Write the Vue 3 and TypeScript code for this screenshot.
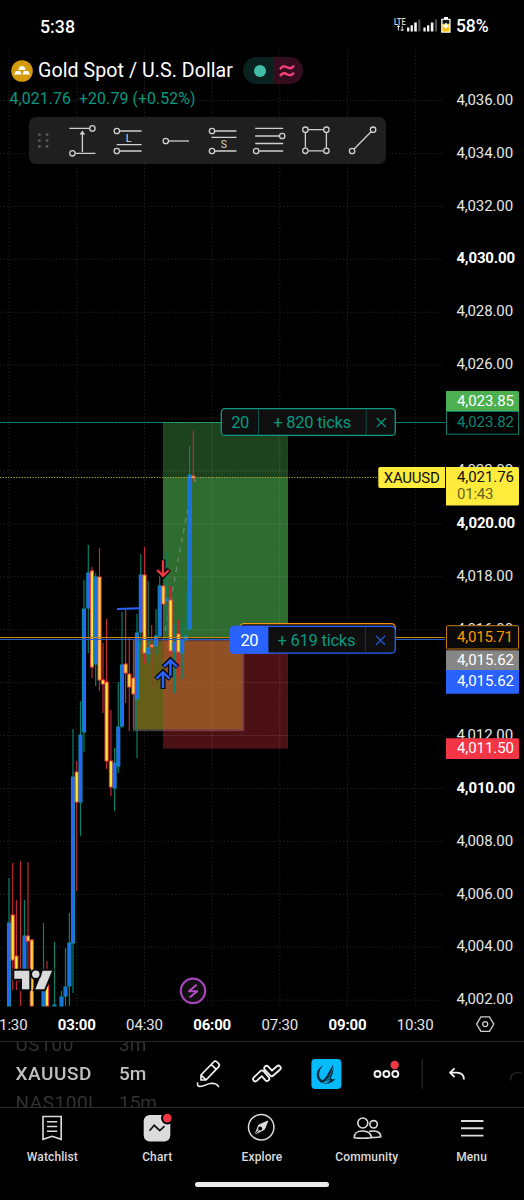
<script setup lang="ts">
type Candle = { x: number; hi: number; lo: number; top: number; bot: number; up: boolean }

const U = true
const D = false
const raw: [number, number, number, number, number, boolean][] = [
  [9, 878, 1006, 923, 1006, U], [12.7, 863, 990, 915, 960, D], [16.4, 900, 990, 956, 970, D],
  [20.5, 861, 1006, 980, 981, D], [24.5, 900, 985, 936, 972, U], [28, 862, 980, 936, 941, D],
  [31.7, 939, 1006, 940, 1006, D], [43.5, 923, 1006, 985, 1006, U], [47, 961, 1006, 985, 1006, D],
  [54.5, 942, 1006, 1005, 1006, U], [61.5, 991, 1006, 997, 1006, U], [65.5, 948, 1006, 987, 996, U],
  [69.4, 913, 1006, 943, 986, U], [73, 729, 993, 777, 943, U], [76.7, 761, 891, 772, 802, D],
  [80.5, 701, 836, 735, 802, U], [84, 580, 752, 609, 732, U], [88.3, 545, 653, 573, 608, U],
  [92, 567, 678, 571, 667, D], [95.7, 573, 686, 577, 664, U], [99.5, 548, 691, 577, 680, D],
  [103, 643, 713, 680, 684, D], [106.6, 619, 769, 682, 761, D], [110.9, 710, 796, 761, 787, D],
  [114.6, 748, 811, 763, 788, U], [118.3, 682, 773, 727, 766, U], [122, 612, 728, 665, 726, U],
  [125.6, 610, 703, 664, 673, D], [129.3, 637, 731, 674, 687, D], [133.4, 640, 728, 678, 694, D],
  [137, 614, 758, 633, 699, U], [140.8, 554, 647, 575, 632, U], [144.5, 547, 664, 575, 653, D],
  [148.2, 581, 663, 648, 654, U], [151.7, 625, 686, 645, 647, D], [156, 609, 655, 636, 646, U],
  [159.7, 576, 638, 586, 636, U], [163.4, 583, 660, 586, 604, D], [167, 553, 632, 599, 601, U],
  [170.6, 586, 654, 600, 651, D], [174.4, 624, 693, 642, 651, U], [178.5, 620, 676, 634, 652, D],
  [182.2, 622, 679, 640, 653, U], [186, 592, 641, 636, 640, U], [189.6, 446, 634, 475, 629, U],
  [193.3, 431, 483, 476, 478, D],
]
const candles: Candle[] = raw.map(([x, hi, lo, top, bot, up]) => ({ x, hi, lo, top, bot, up }))

const gridX = [9.2, 76.8, 144.5, 212.2, 279.8, 347.5, 415.2]
const gridY = Array.from({ length: 18 }, (_, i) => 100.5 + i * 52.92)

const prices = gridY
  .map((y, i) => {
    const value = 4036 - i * 2
    return { y: y + 4.2, text: `${value.toLocaleString('en-US')}.00`, bold: value % 10 === 0, value }
  })
  .filter((p) => p.value !== 4024 && p.value !== 4014)

const times = ['01:30', '03:00', '04:30', '06:00', '07:30', '09:00', '10:30'].map((text, i) => ({
  text,
  x: gridX[i],
  bold: i === 1 || i === 3 || i === 5,
}))

const tabs = ['Watchlist', 'Chart', 'Explore', 'Community', 'Menu']
</script>

<template>
  <div class="screen">
    <header class="status">
      <span class="clock">5:38</span>
      <svg class="signals" width="60" height="20" viewBox="393 17 60 20">
        <text x="394" y="26.4" class="lte" textLength="11.5" lengthAdjust="spacingAndGlyphs">LTE</text>
        <path d="M398.4 26.5v5M396.9 28l1.5-1.6 1.5 1.6M402.2 32v-4.8M400.8 30.4l1.4 1.6 1.4-1.6" stroke="#ddd" stroke-width="1" fill="none" />
        <g fill="#f5f5f5">
          <path d="M407 28.5h2.3v4H407zM410.6 26.3h2.3v6.2h-2.3zM414.2 23.5h2.6v9h-2.6z" />
          <path d="M423.4 28.5h2.3v4h-2.3zM427 26.3h2.3v6.2H427zM430.8 23.5h2.6v9h-2.6z" />
        </g>
        <path d="M418.2 20.5h2.3v12h-2.3zM434.8 20.5h2.3v12h-2.3z" fill="#4d4d4d" />
        <path d="M444 18h4v1.7h2.6v14.1h-9.4V19.7h2.8z" fill="#fff" />
        <path d="M442.5 20.9h6.8v4h-6.8z" fill="#151515" />
        <path d="M442.5 24.9h6.8v7.7h-6.8z" fill="#fbbc04" />
        <path d="M445.9 24l.9 2 2 .9-2 .9-.9 2-.9-2-2-.9 2-.9z" fill="#fff" stroke="#fff" stroke-width=".8" />
      </svg>
      <span class="battery">58%</span>
    </header>

    <main class="chart">
      <svg class="canvas" width="524" height="992" viewBox="0 49 524 992">
        <g class="grid">
          <line v-for="x in gridX" :key="'x' + x" :x1="x" :x2="x" y1="49" y2="1006" />
          <line v-for="y in gridY" :key="'y' + y" x1="0" x2="444" :y1="y" :y2="y" />
        </g>

        <rect x="134" y="640.5" width="109.2" height="89.7" fill="#665e18" stroke="#46413f" stroke-width="2" />
        <rect x="163" y="422.5" width="125" height="216" fill="#4caf50" fill-opacity=".38" />
        <rect x="163" y="477.3" width="125" height="161.2" fill="#4caf50" fill-opacity=".38" />
        <rect x="163" y="640.5" width="125" height="108.2" fill="#f23645" fill-opacity=".31" />
        <g class="grid over">
          <line x1="212.2" x2="212.2" y1="422" y2="749" />
          <line x1="279.8" x2="279.8" y1="422" y2="749" />
          <line v-for="y in gridY.slice(7, 13)" :key="'o' + y" x1="163" x2="288" :y1="y" :y2="y" />
        </g>
        <path d="M165 631L187.5 510M193 478L198.5 484.5" fill="none" stroke="#8d9a8c" stroke-opacity=".65" stroke-width="1.2" stroke-dasharray="5 5" />

        <g v-for="c in candles" :key="c.x">
          <line :x1="c.x" :x2="c.x" :y1="c.hi" :y2="c.lo" :class="c.up ? 'wick-up' : 'wick-down'" />
          <rect :x="c.x - 1.55" :y="c.top" width="3.1" :height="c.bot - c.top" :class="c.up ? 'body-up' : 'body-down'" />
        </g>

        <line x1="117" y1="609" x2="140" y2="608.2" stroke="#2962ff" stroke-width="2" />
        <line x1="0" x2="445" y1="422.5" y2="422.5" stroke="#07806f" />
        <line x1="163" x2="222" y1="422.5" y2="422.5" stroke="#1f9a6c" />
        <line x1="0" x2="378" y1="477.5" y2="477.5" stroke="#b6a93a" stroke-dasharray="1.3 1.4" />
        <line x1="0" x2="445" y1="637.5" y2="637.5" stroke="#c98410" />
        <line x1="0" x2="445" y1="639.5" y2="639.5" stroke="#2d5ccc" />

        <g fill="none">
          <g stroke="#0b0b0b" stroke-width="5">
            <path d="M163 559.5v16M156.8 569.3l6.2 6.5 6.2-6.5" />
            <path d="M170.4 677v-16.5M163.2 667l7.2-7 7.2 7" />
            <path d="M163 689v-16.5M155.8 679l7.2-7 7.2 7" />
          </g>
          <path d="M163 560.3v15M157.2 569.9l5.8 6 5.8-6" stroke="#f23645" stroke-width="2.2" />
          <path d="M170.4 676v-15M163.8 666.7l6.6-6.4 6.6 6.4" stroke="#2962ff" stroke-width="2.4" />
          <path d="M163 688v-15M156.4 678.7l6.6-6.4 6.6 6.4" stroke="#2962ff" stroke-width="2.4" />
        </g>

        <g class="tag">
          <rect x="221.3" y="408.6" width="174" height="26.8" rx="3.5" fill="#0f0f0f" stroke="#0e9a84" stroke-width="1.3" />
          <path d="M258.5 409.5v25.3M366.2 409.5v25.3" stroke="#114f4b" />
          <text x="231.3" y="428.3" textLength="18" fill="#089981">20</text>
          <text x="273.2" y="428.3" textLength="78" fill="#089981">+ 820 ticks</text>
          <path d="M376.8 418l9 9M385.8 418l-9 9" stroke="#089981" stroke-width="1.1" />
        </g>
        <rect x="240" y="623.6" width="155.2" height="20" rx="4" fill="#0f0f0f" stroke="#f5920b" stroke-width="1.3" />
        <g class="tag">
          <rect x="230.4" y="626.4" width="164.9" height="26.8" rx="4" fill="#0f0f0f" stroke="#2962ff" stroke-width="1.3" />
          <path d="M233.9 625.8H268.4V653.8H233.9A4 4 0 0 1 229.9 649.8V629.8A4 4 0 0 1 233.9 625.8Z" fill="#2962ff" />
          <path d="M365.4 627v25.6" stroke="#1b3068" />
          <text x="240.6" y="646.2" textLength="18" fill="#fff">20</text>
          <text x="277.5" y="646.2" textLength="78" fill="#089981">+ 619 ticks</text>
          <path d="M376 635.8l9 9M385 635.8l-9 9" stroke="#2962ff" stroke-width="1.1" />
        </g>

        <g class="axis">
          <text v-for="p in prices" :key="p.text" x="456.4" :y="p.y" :class="{ bold: p.bold }" :textLength="p.bold ? 58.7 : 56.7">{{ p.text }}</text>
          <text v-for="t in times" :key="t.text" :x="t.x" y="1029.9" text-anchor="middle" :class="{ bold: t.bold }" :textLength="t.bold ? 38 : 36.8">{{ t.text }}</text>
        </g>

        <g class="badge">
          <path d="M446 391h71.5q1.5 0 1.5 1.5V411H446z" fill="#4caf50" />
          <text x="457" y="405.9" textLength="57" fill="#fff">4,023.85</text>
          <rect x="446.5" y="411.5" width="72" height="22.7" fill="#000" stroke="#087c6b" />
          <text x="457" y="427.3" textLength="57" fill="#089981" fill-opacity=".9">4,023.82</text>
          <path d="M380 467H445v21H380q-1.7 0-1.7-1.7v-17.6q0-1.7 1.7-1.7z" fill="#ffeb3b" />
          <text x="383.8" y="483" textLength="56" fill="#0f0f0f">XAUUSD</text>
          <path d="M446 467h71.3q1.7 0 1.7 1.7v35.1q0 1.7-1.7 1.7H446z" fill="#ffeb3b" />
          <text x="457" y="481.6" textLength="57" fill="#0f0f0f">4,021.76</text>
          <text x="457" y="499" textLength="36.5" fill="#69631f">01:43</text>
          <rect x="446.5" y="625.7" width="72" height="23.3" rx="1" fill="#0a0a0a" stroke="#c47a10" />
          <text x="457" y="641.6" textLength="56" fill="#ff9800">4,015.71</text>
          <path d="M446 650.3h73V670h-73z" fill="#868686" />
          <text x="457" y="665" textLength="57" fill="#fff">4,015.62</text>
          <path d="M446 670h73v22.2q0 1.5-1.5 1.5H446z" fill="#2962ff" />
          <text x="457" y="686.2" textLength="57" fill="#fff">4,015.62</text>
          <path d="M446 738.3h71.5q1.5 0 1.5 1.5v17.7q0 1.5-1.5 1.5H446z" fill="#f23645" />
          <text x="457" y="753" textLength="57" fill="#fff">4,011.50</text>
        </g>

        <g fill="#dbdbdb" stroke="#0b0b0b" stroke-width="4" paint-order="stroke">
          <path d="M14.3 970.7h15v18.6H22v-10.6h-7.7z" />
          <path d="M42.7 970.7H52l-7.7 18.6h-9z" />
          <circle cx="35.8" cy="974.3" r="3.7" />
        </g>
        <circle cx="193" cy="990.8" r="12.2" fill="#0f0f0f" stroke="#a945bb" stroke-width="2.2" />
        <path d="M196.6 984.8l-7.6 6.4h8.2l-7.6 6.4" fill="none" stroke="#b44bc7" stroke-width="2" stroke-linejoin="round" />
        <path d="M480.9 1016.8h8.6l4.3 7.3-4.3 7.3h-8.6l-4.3-7.3z" fill="none" stroke="#cfcfcf" stroke-width="1.3" />
        <circle cx="485.2" cy="1024.1" r="2.5" fill="none" stroke="#cfcfcf" stroke-width="1.3" />
      </svg>

      <div class="overlay">
        <div class="title-row">
          <svg width="22" height="22" viewBox="0 0 22 22">
            <circle cx="11" cy="11" r="10.8" fill="#d59a0a" />
            <path d="M8.9 6.3h4.2l1.7 3.6H7.2zM4.9 10.9h4.2l1.5 3.7H3zM12.9 10.9h4.2l1.9 3.7h-7.6z" fill="#fff" />
          </svg>
          <h1 class="title">Gold Spot / U.S. Dollar</h1>
          <div class="pill">
            <span class="pill-left"><i class="dot"></i></span>
            <span class="pill-right">
              <svg width="18" height="14" viewBox="0 0 18 14" fill="none" stroke="#f7407c" stroke-width="2.3">
                <path d="M2 5.3C4.5 1.3 6.8 2 9 3.3S13.5 5.3 16 1.7M2 12.2C4.5 8.2 6.8 8.9 9 10.2S13.5 12.2 16 8.6" />
              </svg>
            </span>
          </div>
        </div>
        <div class="quote"><span>4,021.76</span><span>+20.79 (+0.52%)</span></div>

        <div class="tools">
          <svg class="grip" width="30" height="47" viewBox="28.5 117 30 47" fill="#5c5c5c">
            <template v-for="gy in [134.6, 140.6, 146.5]" :key="gy">
              <circle cx="39" :cy="gy" r="1.4" /><circle cx="46.6" :cy="gy" r="1.4" />
            </template>
          </svg>
          <svg viewBox="58.6 117 46.8 47">
            <path d="M69 128.4h20M75 153.3h20M82 152v-19" /><path d="M82 130.5l2.8 4h-5.6z" fill="#d5d5d5" stroke="none" />
            <circle cx="92" cy="128.4" r="2.7" /><circle cx="72" cy="153.3" r="2.7" />
          </svg>
          <svg viewBox="105.4 117 46.8 47">
            <path d="M120 131h22M117 144.6h25M120 151h22" /><circle cx="117.2" cy="131" r="2.7" /><circle cx="117.2" cy="151" r="2.7" />
            <text x="129" y="141.8" class="glyph">L</text>
          </svg>
          <svg viewBox="152.2 117 46.8 47"><path d="M169 141h20.2" /><circle cx="166" cy="141" r="2.7" /></svg>
          <svg viewBox="199 117 46.8 47">
            <path d="M215 131h21.5M211.5 137.3h25M215 151h21.5" /><circle cx="212" cy="131" r="2.7" /><circle cx="212" cy="151" r="2.7" />
            <text x="223.8" y="148" class="glyph">S</text>
          </svg>
          <svg viewBox="245.8 117 46.8 47">
            <path d="M255 128.4h28M255 136h24M255 143.5h28M259 151h24" /><circle cx="282" cy="136" r="2.7" /><circle cx="256" cy="151" r="2.7" />
          </svg>
          <svg viewBox="292.6 117 46.8 47">
            <path d="M309 129.7h15M309 150.8h15M306 132.7v15M327 132.7v15" />
            <circle cx="306" cy="129.7" r="2.7" /><circle cx="327" cy="129.7" r="2.7" /><circle cx="306" cy="150.8" r="2.7" /><circle cx="327" cy="150.8" r="2.7" />
          </svg>
          <svg viewBox="339.4 117 46.8 47"><path d="M354.5 149l17-17.3" /><circle cx="352.5" cy="151" r="2.7" /><circle cx="373.5" cy="129.7" r="2.7" /></svg>
        </div>
      </div>
    </main>

    <section class="actions">
      <div class="wheel symbols"><span>US100</span><strong>XAUUSD</strong><span>NAS100U</span></div>
      <div class="wheel frames"><span>3m</span><strong>5m</strong><span>15m</span></div>
      <svg class="action-icons" width="340" height="65" viewBox="184 1042 340 65" fill="none" stroke="#f2f2f2" stroke-width="1.7" stroke-linejoin="round" stroke-linecap="round">
        <path d="M201 1080V1075L213.6 1062Q215.3 1060.4 217 1062L218.6 1063.6Q220.2 1065.2 218.6 1066.9L206 1080ZM211.3 1064.5L216.2 1069.4M201.5 1075.5L205.7 1079.7" />
        <path d="M197.6 1083Q196.8 1086.3 200 1086.4C205 1086.4 207 1083.3 212 1083.3Q216.5 1083.4 218.6 1086.6" stroke-width="1.5" />
        <path d="M255.4 1079L262 1072.8L267 1078.6M266.6 1068.2L271.8 1073.8L278.4 1068" stroke-width="6.4" />
        <path d="M255.4 1079L262 1072.8L267 1078.6M266.6 1068.2L271.8 1073.8L278.4 1068" stroke="#000" stroke-width="2.8" />
        <rect x="311.4" y="1059" width="30" height="30" rx="4" fill="#06bbfb" stroke="none" />
        <g fill="#092a3b" stroke="none">
          <path d="M323.2 1065.3C315.5 1069 314.5 1078.5 321 1082.7C326.5 1083.5 331.5 1075 333.5 1064C328.5 1071 326.5 1078.5 322.3 1080.3C317.5 1077.5 318.5 1070 323.2 1065.3Z" />
          <path d="M333.3 1066.5C331.5 1073.5 329 1081 324 1083.2C329.5 1083.5 330 1079.5 331 1077.5C331.5 1079.5 333.5 1080 336 1078.5C331.5 1083.5 327.5 1084.5 323 1083.4C330 1082 334 1075 333.3 1066.5Z" />
        </g>
        <g stroke-width="1.9"><circle cx="377.5" cy="1074" r="3" /><circle cx="386.4" cy="1074" r="3" /><circle cx="395.3" cy="1074" r="3" /></g>
        <circle cx="394.7" cy="1065" r="4.2" fill="#f23645" stroke="none" />
        <path d="M422.2 1059.5v29" stroke="#303030" stroke-width="1" />
        <path d="M454.6 1068.3L450 1072.6L454.6 1077M450.5 1072.6H456.5Q464 1072.6 464 1079.5" stroke-linecap="butt" stroke-width="1.8" />
        <path d="M510.5 1080Q510.5 1073 517 1072.6H521" stroke="#1d1d1d" />
      </svg>
    </section>

    <nav class="nav">
      <a v-for="(tab, i) in tabs" :key="tab" class="nav-item">
        <svg width="32" height="32" viewBox="0 0 32 32" fill="none" stroke="#dcdcdc" stroke-width="1.6">
          <template v-if="i === 0">
            <path d="M7 4.5H25.2V27.3L16.1 24.3L7 27.3Z" />
            <path d="M11 9.7h10.2M11 14.5h10.2M11 19.3h10.2" stroke-width="1.5" />
          </template>
          <template v-else-if="i === 1">
            <rect x="2.7" y="3" width="26.6" height="26.6" rx="6" fill="#dcdcdc" stroke="none" />
            <path d="M8.5 18.7L13.2 13.3L18.8 18.6L23.5 14.2" stroke="#111" stroke-width="1.7" />
            <circle cx="26.3" cy="6.1" r="6.3" fill="#000" stroke="none" />
            <circle cx="26.3" cy="6.1" r="4.3" fill="#f23645" stroke="none" />
          </template>
          <template v-else-if="i === 2">
            <circle cx="15.2" cy="15.3" r="12.7" stroke-width="1.5" />
            <path d="M21.8 9L18.3 17.5L9.3 21.8L12.8 13Z" fill="#dcdcdc" stroke-width="1" />
            <circle cx="14.2" cy="16.4" r="2" fill="#000" stroke="none" />
            <path d="M13 17.7L9.3 21.8" stroke="#111" stroke-width="1" />
          </template>
          <template v-else-if="i === 3">
            <circle cx="11.8" cy="11" r="5" /><circle cx="22.6" cy="12.3" r="3.7" />
            <path d="M3.3 25.8C3.3 20.5 6 19 11.5 19S20.2 20.5 20.2 25.8Q12 26.8 3.3 25.8Z" />
            <path d="M18.3 19.4C25 18 29.8 19.8 29.8 24.8Q26 25.8 20.5 25.4" />
          </template>
          <path v-else d="M5 9h22.4M5 16.3h22.4M5 23.6h22.4" stroke-width="1.9" />
        </svg>
        <span>{{ tab }}</span>
      </a>
    </nav>
    <div class="home"><i></i></div>
  </div>
</template>

<style>
html,
body {
  background: #000;
}
</style>

<style scoped>
.screen {
  width: 524px;
  height: 1200px;
  display: flex;
  flex-direction: column;
  overflow: hidden;
  background: #000;
  color: #fff;
  font-family: Roboto, 'Liberation Sans', sans-serif;
}
svg {
  display: block;
  flex: none;
}
.status {
  height: 49px;
  box-sizing: border-box;
  padding: 3px 35px 0 40px;
  display: flex;
  align-items: center;
  font-size: 17.8px;
  font-weight: 500;
}
.signals {
  margin-left: auto;
  margin-right: 3px;
}
.lte {
  font-size: 8.5px;
  font-weight: 500;
  fill: #ddd;
}
.battery {
  width: 33px;
  font-size: 17.5px;
  letter-spacing: -0.1px;
}
.chart {
  display: grid;
  height: 992px;
}
.canvas,
.overlay {
  grid-area: 1 / 1;
}
.grid line {
  stroke: #232323;
  stroke-width: 1;
  stroke-dasharray: 1.3 2.2;
}
.grid.over line {
  stroke: #fff;
  stroke-opacity: 0.11;
}
.wick-up {
  stroke: #07806c;
  stroke-width: 1.2;
}
.wick-down {
  stroke: #bd2a36;
  stroke-width: 1.2;
}
.body-up {
  fill: #2962ff;
  stroke: #0b8fb0;
  stroke-width: 1;
}
.body-down {
  fill: #ffeb3b;
  stroke: #f5433f;
  stroke-width: 1;
}
.tag text {
  font-size: 16.5px;
}
.axis text {
  font-size: 15px;
  fill: #e6e6e6;
}
.axis .bold {
  font-weight: 700;
  fill: #fff;
}
.badge text {
  font-size: 15px;
}
.overlay {
  align-self: start;
  display: flex;
  flex-direction: column;
  align-items: flex-start;
}
.title-row {
  display: flex;
  align-items: center;
  height: 27px;
  margin: 8px 0 0 11px;
}
.title {
  width: 205px;
  margin: 0 0 0 5px;
  font-size: 19.6px;
  font-weight: 400;
  letter-spacing: 0.06px;
  white-space: nowrap;
}
.pill {
  display: flex;
  width: 60px;
  height: 27px;
  border-radius: 14px;
  overflow: hidden;
}
.pill-left,
.pill-right {
  flex: 1;
  display: flex;
  align-items: center;
  justify-content: center;
}
.pill-left {
  background: #07221f;
  padding-left: 3px;
}
.pill-right {
  background: #360d1e;
  padding-right: 3px;
}
.dot {
  width: 12px;
  height: 12px;
  border-radius: 50%;
  background: #42bda8;
}
.quote {
  display: flex;
  gap: 8px;
  margin: 5px 0 0 9.5px;
  line-height: 20px;
  font-size: 15.8px;
  letter-spacing: 0.12px;
  color: #089981;
}
.tools {
  display: flex;
  width: 357.5px;
  height: 47px;
  margin: 8px 0 0 28.5px;
  border-radius: 7px;
  background: #1f1f1f;
}
.tools svg:not(.grip) {
  width: 46.8px;
  height: 47px;
  fill: none;
  stroke: #d0d0d0;
  stroke-width: 1.3;
}
.tools .glyph {
  font-size: 10.5px;
  fill: #d8d8d8;
  stroke: none;
  text-anchor: middle;
}
.actions {
  display: flex;
  height: 66px;
  box-sizing: border-box;
  border-top: 1px solid #2b2b2b;
  overflow: hidden;
}
.wheel {
  display: flex;
  flex-direction: column;
  justify-content: center;
  box-sizing: border-box;
  padding-bottom: 2px;
  overflow: hidden;
  font-size: 19px;
  line-height: 29px;
  color: #3f3f3f;
  -webkit-mask-image: linear-gradient(#000b, #000 35%, #000 65%, #000b);
  mask-image: linear-gradient(#000b, #000 35%, #000 65%, #000b);
}
.wheel span,
.wheel strong {
  flex: none;
}
.wheel strong {
  font-weight: 500;
  color: #c0c0c0;
}
.symbols {
  width: 81px;
  margin-left: 15.5px;
  letter-spacing: 0.55px;
}
.frames {
  width: 65px;
  margin-left: 22.5px;
}
.nav {
  display: grid;
  grid-template-columns: repeat(5, 1fr);
  height: 68px;
  border-top: 1px solid #2b2b2b;
}
.nav-item {
  display: flex;
  flex-direction: column;
  align-items: center;
  padding-top: 4px;
  font-size: 12px;
  font-weight: 500;
  line-height: 16px;
  letter-spacing: 0.12px;
  color: #dcdcdc;
}
.nav-item span {
  margin-top: 5px;
}
.home {
  display: flex;
  justify-content: center;
  padding-top: 6px;
}
.home i {
  width: 134px;
  height: 5px;
  border-radius: 3px;
  background: #ececec;
}
</style>
